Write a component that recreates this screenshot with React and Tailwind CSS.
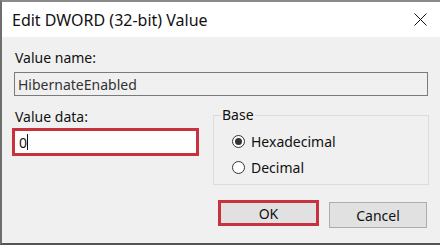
import React from 'react';

const font = { fontFamily: '"Noto Sans", "Open Sans", Arial, sans-serif' };

const Radio = ({ checked, label }) => (
  <div className="flex items-center h-[13px]">
    <span className="w-[13px] h-[13px] rounded-full border border-[#333] bg-white flex items-center justify-center">
      {checked && <span className="w-[7px] h-[7px] rounded-full bg-[#333]" />}
    </span>
    <span className="ml-[6px] text-[14px] leading-[16px] text-[#111]">{label}</span>
  </div>
);

export default function App() {
  return (
    <div
      style={font}
      className="w-[440px] h-[245px] overflow-hidden bg-[#f0f0f0] border-t-2 border-l-2 border-b-2 border-t-[#8a8a8a] border-l-[#6e6e6e] border-b-[#555]"
    >
      {/* Title bar */}
      <div className="h-[35px] bg-white flex items-center justify-between pl-[10px] pr-[13px]">
        <span className="text-[16px] text-[#111] leading-[20px]">Edit DWORD (32-bit) Value</span>
        <svg width="13" height="13" viewBox="0 0 13 13">
          <path d="M0.5 0.5 L12.5 12.5 M12.5 0.5 L0.5 12.5" stroke="#111" strokeWidth="1" />
        </svg>
      </div>

      <div className="pl-[10px] pt-[13px]">
        <div className="ml-[3px] text-[14px] leading-[16px] text-[#111]">Value name:</div>
        <div className="ml-[2px] mt-[6px] w-[414px] h-[24px] border border-[#7a7a7a] bg-[#f0f0f0] flex items-center pl-[3px] text-[14px] text-[#333]">
          HibernateEnabled
        </div>

        <div className="flex mt-[13px]">
          <div className="w-[187px]">
            <div className="ml-[3px] text-[14px] leading-[16px] text-[#111]">Value data:</div>
            <div className="mt-[3px] h-[28px] border-[3px] border-[#c7323e] bg-white flex items-center pl-[4px] text-[14px] text-[#111]">
              0<span className="w-px h-[16px] bg-[#111]" />
            </div>
          </div>

          <div className="ml-[14px] mt-[6px] relative w-[216px] h-[70px] border border-[#dcdcdc] pl-[18px] pt-[19px]">
            <span className="absolute -top-[9px] left-[7px] px-[1px] bg-[#f0f0f0] text-[14px] leading-[16px] text-[#111]">Base</span>
            <Radio checked label="Hexadecimal" />
            <div className="mt-[13px]">
              <Radio label="Decimal" />
            </div>
          </div>
        </div>

        <div className="flex items-start mt-[15px] ml-[206px]">
          <button className="w-[101px] h-[26px] border-[3px] border-[#c7323e] bg-[#e1e1e1] text-[14px] text-[#111] flex items-center justify-center">
            OK
          </button>
          <button className="ml-[10px] mt-[2px] w-[98px] h-[26px] border border-[#adadad] bg-[#e1e1e1] text-[14px] text-[#111] flex items-center justify-center">
            Cancel
          </button>
        </div>
      </div>
    </div>
  );
}
